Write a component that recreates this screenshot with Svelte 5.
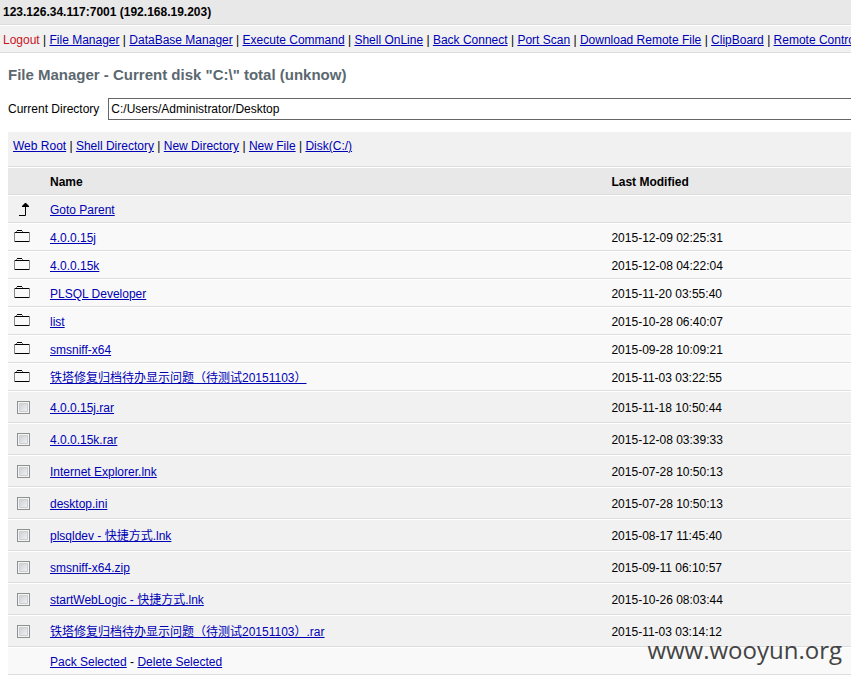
<script>
  const nav = ['File Manager', 'DataBase Manager', 'Execute Command', 'Shell OnLine', 'Back Connect', 'Port Scan', 'Download Remote File', 'ClipBoard', 'Remote Control'];
  const tools = ['Web Root', 'Shell Directory', 'New Directory', 'New File', 'Disk(C:/)'];
  const folders = [
    ['4.0.0.15j', '2015-12-09 02:25:31'],
    ['4.0.0.15k', '2015-12-08 04:22:04'],
    ['PLSQL Developer', '2015-11-20 03:55:40'],
    ['list', '2015-10-28 06:40:07'],
    ['smsniff-x64', '2015-09-28 10:09:21'],
    ['铁塔修复归档待办显示问题（待测试20151103）', '2015-11-03 03:22:55'],
  ];
  const files = [
    ['4.0.0.15j.rar', '2015-11-18 10:50:44'],
    ['4.0.0.15k.rar', '2015-12-08 03:39:33'],
    ['Internet Explorer.lnk', '2015-07-28 10:50:13'],
    ['desktop.ini', '2015-07-28 10:50:13'],
    ['plsqldev - 快捷方式.lnk', '2015-08-17 11:45:40'],
    ['smsniff-x64.zip', '2015-09-11 06:10:57'],
    ['startWebLogic - 快捷方式.lnk', '2015-10-26 08:03:44'],
    ['铁塔修复归档待办显示问题（待测试20151103）.rar', '2015-11-03 03:14:12'],
  ];
  let directory = $state('C:/Users/Administrator/Desktop');
</script>

<div class="page">
  <header>123.126.34.117:7001 (192.168.19.203)</header>
  <nav>
    <a class="logout" href="#logout">Logout</a>{#each nav as item}{' | '}<a href="#nav">{item}</a>{/each}
  </nav>
  <main>
    <h2>File Manager - Current disk "C:\" total (unknow)</h2>
    <div class="directory">
      <label for="dir">Current Directory</label>
      <input id="dir" type="text" bind:value={directory} />
    </div>
    <div class="tools">
      {#each tools as item, i}{#if i > 0}{' | '}{/if}<a href="#tool">{item}</a>{/each}
    </div>
    <table>
      <thead>
        <tr><th class="mark"></th><th class="name">Name</th><th>Last Modified</th></tr>
      </thead>
      <tbody>
        <tr class="dark">
          <td><svg class="up" viewBox="0 0 11 13" width="11" height="13" aria-hidden="true"><path d="M0 12.5H6.5V3" fill="none" stroke="#000" /><path d="M6 0H7L10 3V4H3V3Z" /></svg></td>
          <td colspan="2"><a href="#parent">Goto Parent</a></td>
        </tr>
        {#each folders as [name, date]}
          <tr>
            <td><svg class="folder" viewBox="0 0 16 12" width="16" height="12" aria-hidden="true"><path d="M.5 2V12M15.5 2V12" stroke="#888" /><path d="M1 2.5H15M1 11.5H15M3 .5H8" stroke="#000" /><path d="M2.5 1V2M8.5 1V2" stroke="#777" /></svg></td>
            <td><a href="#folder">{name}</a></td>
            <td>{date}</td>
          </tr>
        {/each}
        {#each files as [name, date]}
          <tr class="dark file">
            <td><input type="checkbox" aria-label={name} /></td>
            <td><a href="#file">{name}</a></td>
            <td>{date}</td>
          </tr>
        {/each}
        <tr>
          <td></td>
          <td colspan="2"><a href="#pack">Pack Selected</a> - <a href="#delete">Delete Selected</a></td>
        </tr>
      </tbody>
    </table>
  </main>
  <div class="watermark">www.wooyun.org</div>
</div>

<style>
  :global(body) { margin: 0; background: #fff; }
  .page {
    position: relative;
    overflow: hidden;
    padding-bottom: 4px;
    font: 12px/16px "Liberation Sans", Arial, "Noto Sans CJK SC", sans-serif;
    color: #000;
  }
  a { color: #0000b4; text-decoration: underline; }
  header {
    padding: 4px 3px;
    background: #e8e8e8;
    border-bottom: 1px solid #ddd;
    font-weight: bold;
  }
  nav {
    padding: 6px 3px 4px;
    background: #f1f1f1;
    border-top: 1px solid #fff;
    border-bottom: 1px solid #ddd;
    white-space: nowrap;
    overflow: hidden;
  }
  a.logout { color: #c8141e; text-decoration: none; }
  main { padding: 14px 0 0 8px; }
  h2 { margin: 0; font-size: 15px; line-height: 16px; color: #5b686f; }
  .directory { display: flex; align-items: center; gap: 9px; padding: 15px 0 12px; white-space: nowrap; }
  .directory input {
    flex: 1;
    min-width: 0;
    height: 22px;
    box-sizing: border-box;
    padding: 0 2px;
    border: 1px solid #666;
    border-right: 0;
    background: #fff;
    font: inherit;
    color: #000;
  }
  .tools { padding: 6px 5px 12px; background: #f1f1f1; border-bottom: 1px solid #ddd; }
  table { width: 100%; table-layout: fixed; border-collapse: separate; border-spacing: 0; }
  th, td {
    height: 28px;
    box-sizing: border-box;
    padding: 2px 5px 0;
    border-top: 1px solid #fff;
    border-bottom: 1px solid #ddd;
    text-align: left;
    white-space: nowrap;
    background: #f9f9f9;
    line-height: 16px;
  }
  th { background: #e8e8e8; }
  .mark { width: 37px; }
  .name { width: 66.6%; }
  .dark td { background: #f1f1f1; }
  .file td { height: 32px; }
  td:first-child { padding-top: 0; }
  svg { display: block; }
  .up { margin-left: 6px; }
  .folder { margin-left: 1px; margin-bottom: 3px; }
  input[type="checkbox"] {
    appearance: none;
    display: block;
    width: 13px;
    height: 13px;
    margin: 0 0 0 4px;
    border: 1px solid #8e8f8f;
    background: linear-gradient(135deg, #c6cbcf, #f6f6f6);
    box-shadow: inset 0 0 0 1px #f4f4f4, inset 0 0 0 2px #ccd0d3;
  }
  .watermark {
    position: absolute;
    right: 9px;
    bottom: 13px;
    font: 24px/32px "Open Sans", sans-serif;
    color: #444;
    pointer-events: none;
  }
</style>
